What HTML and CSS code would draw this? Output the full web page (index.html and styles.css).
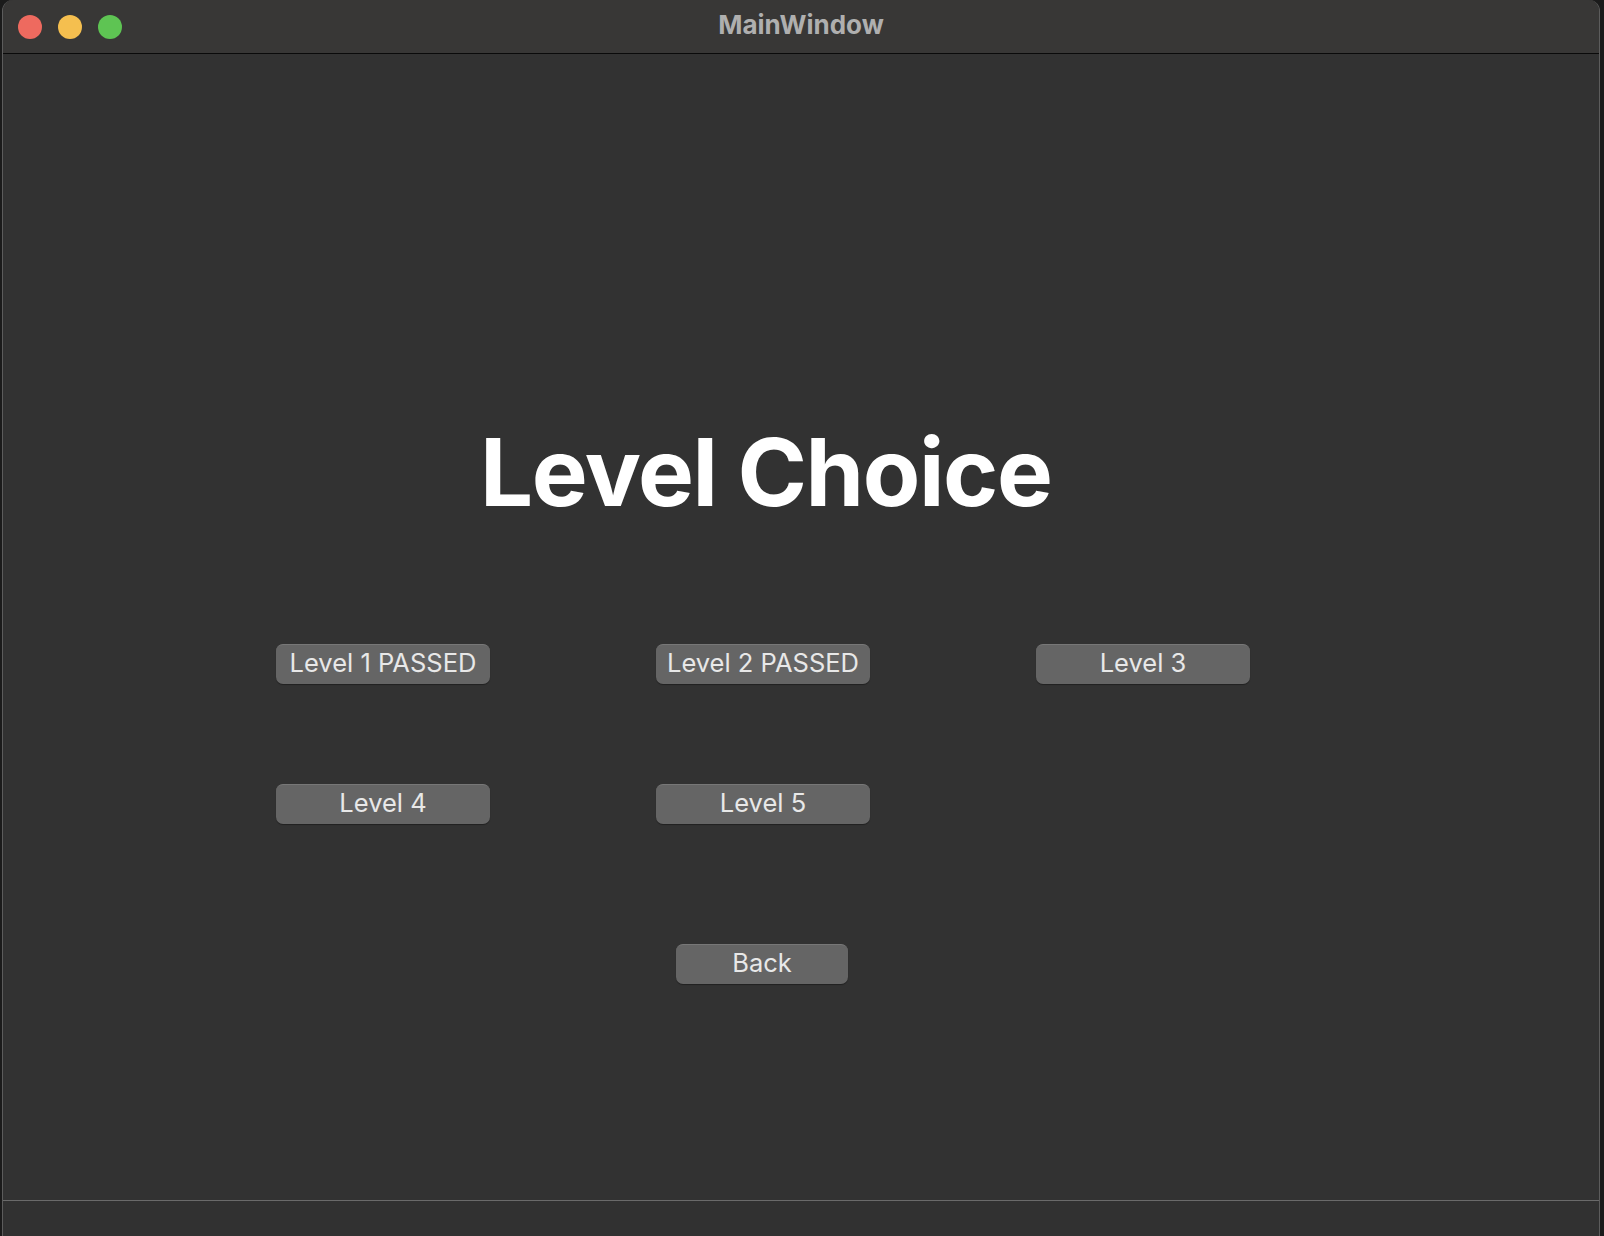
FILE: index.html
```html
<!DOCTYPE html>
<html>
<head>
<meta charset="utf-8">
<link rel="stylesheet" href="styles.css">
</head>
<body>
<div class="window">
  <div class="titlebar">
    <div class="lights">
      <span class="light red"></span>
      <span class="light yellow"></span>
      <span class="light green"></span>
    </div>
    <div class="wtitle">MainWindow</div>
  </div>
  <div class="main">
    <h1 class="heading">Level Choice</h1>
    <div class="levels">
      <button class="btn">Level 1 PASSED</button>
      <button class="btn">Level 2 PASSED</button>
      <button class="btn">Level 3</button>
      <button class="btn">Level 4</button>
      <button class="btn">Level 5</button>
    </div>
    <button class="btn back">Back</button>
  </div>
  <div class="statusbar"></div>
</div>
</body>
</html>
```
FILE: styles.css
```css
html, body {
  margin: 0;
  padding: 0;
}
body {
  width: 1604px;
  height: 1236px;
  overflow: hidden;
  background: #1b1b1b;
  font-family: Inter, "Liberation Sans", sans-serif;
}
.window {
  margin-left: 2px;
  width: 1596px;
  height: 1236px;
  border-left: 1px solid #5c5c5c;
  border-right: 1px solid #5c5c5c;
  border-radius: 11px 11px 0 0;
  background: #323232;
  display: flex;
  flex-direction: column;
  overflow: hidden;
}
.titlebar {
  height: 53px;
  flex: none;
  background: #383736;
  border-bottom: 1px solid #0a0a0a;
  position: relative;
  display: flex;
  align-items: center;
  padding-left: 15px;
}
.lights {
  display: flex;
  gap: 16px;
}
.light {
  width: 24px;
  height: 24px;
  border-radius: 50%;
  display: block;
}
.red { background: #ee6a5f; }
.yellow { background: #f5bf4f; }
.green { background: #5ec453; }
.wtitle {
  position: absolute;
  left: 0;
  right: 0;
  top: 0;
  height: 53px;
  line-height: 50px;
  text-align: center;
  font-weight: 700;
  font-size: 26px;
  color: #afafaf;
}
.main {
  flex: 1;
  display: flex;
  flex-direction: column;
  align-items: flex-start;
}
.heading {
  margin: 362px 0 0 477px;
  font-size: 94px;
  line-height: 113px;
  font-weight: 700;
  color: #ffffff;
  letter-spacing: -1.4px;
}
.levels {
  margin: 115px 0 0 273px;
  display: grid;
  grid-template-columns: repeat(3, 214px);
  column-gap: 166px;
  row-gap: 100px;
}
.btn {
  height: 40px;
  width: 214px;
  padding: 0 0 3px 0;
  border: none;
  border-top: 1px solid #777;
  border-radius: 7px;
  background: #656565;
  color: #e8e8e8;
  font-family: Inter, "Liberation Sans", sans-serif;
  font-size: 25.5px;
  line-height: 34px;
  box-shadow: 0 1px 1px rgba(0,0,0,0.35);
}
.back {
  width: 172px;
  margin: 120px 0 0 673px;
}
.statusbar {
  flex: none;
  height: 35px;
  border-top: 1px solid #6a6a6a;
  background: #313131;
}
```
